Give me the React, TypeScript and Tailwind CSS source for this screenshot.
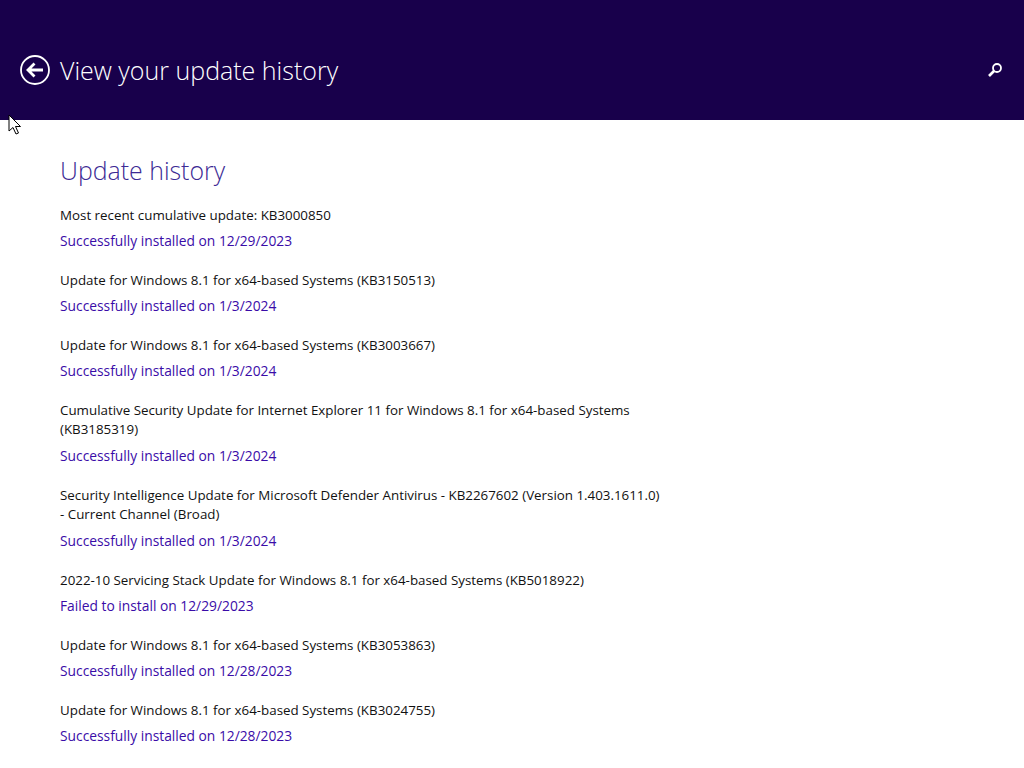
import React from "react";

const rows: [string[], string][] = [
  [["Most recent cumulative update: KB3000850"], "Successfully installed on 12/29/2023"],
  [["Update for Windows 8.1 for x64-based Systems (KB3150513)"], "Successfully installed on 1/3/2024"],
  [["Update for Windows 8.1 for x64-based Systems (KB3003667)"], "Successfully installed on 1/3/2024"],
  [["Cumulative Security Update for Internet Explorer 11 for Windows 8.1 for x64-based Systems", "(KB3185319)"], "Successfully installed on 1/3/2024"],
  [["Security Intelligence Update for Microsoft Defender Antivirus - KB2267602 (Version 1.403.1611.0)", "- Current Channel (Broad)"], "Successfully installed on 1/3/2024"],
  [["2022-10 Servicing Stack Update for Windows 8.1 for x64-based Systems (KB5018922)"], "Failed to install on 12/29/2023"],
  [["Update for Windows 8.1 for x64-based Systems (KB3053863)"], "Successfully installed on 12/28/2023"],
  [["Update for Windows 8.1 for x64-based Systems (KB3024755)"], "Successfully installed on 12/28/2023"],
];

export default function App() {
  return (
    <div className="relative w-[1024px] h-[768px] overflow-hidden bg-white font-['Open_Sans','Noto_Sans',sans-serif]">
      <header className="h-[120px] bg-[#18004b] flex items-center pl-5 pr-[21px] pt-[20px] text-white">
        <svg width="30" height="30" viewBox="0 0 30 30" fill="none" stroke="white" className="shrink-0">
          <circle cx="15" cy="15" r="14" strokeWidth="1.8" />
          <path d="M23 15H9M14.5 8.5L8 15l6.5 6.5" strokeWidth="2.8" />
        </svg>
        <h1 className="ml-[10px] text-[25px] leading-[34px] font-light">View your update history</h1>
        <svg width="16" height="16" viewBox="0 0 16 16" fill="none" stroke="white" className="ml-auto">
          <circle cx="10" cy="6" r="4" strokeWidth="1.8" />
          <path d="M7 9L2 14" strokeWidth="2.6" />
        </svg>
      </header>
      <main className="pl-[60px] pt-[32px]">
        <h2 className="text-[24.9px] leading-[36px] font-light text-[#3c2a94]">Update history</h2>
        <div className="mt-[18px] flex flex-col gap-[21px] text-[13.35px] leading-[19px]">
          {rows.map(([title, status], i) => (
            <div key={i} className={title.length > 1 ? "flex flex-col gap-[7px]" : "flex flex-col gap-[6px]"}>
              <div className="text-[#111111]">
                {title.map((t) => (
                  <div key={t} className="whitespace-nowrap">{t}</div>
                ))}
              </div>
              <div className="text-[#3a0ca8] text-[13.8px]">{status}</div>
            </div>
          ))}
        </div>
      </main>
      <svg width="14" height="22" viewBox="0 0 14 22" className="absolute left-[8px] top-[114px]">
        <path d="M1 1V17L5 13.5L8 20L10.5 19L7.5 12.5H12.5Z" fill="white" stroke="black" strokeWidth="1" />
      </svg>
    </div>
  );
}
